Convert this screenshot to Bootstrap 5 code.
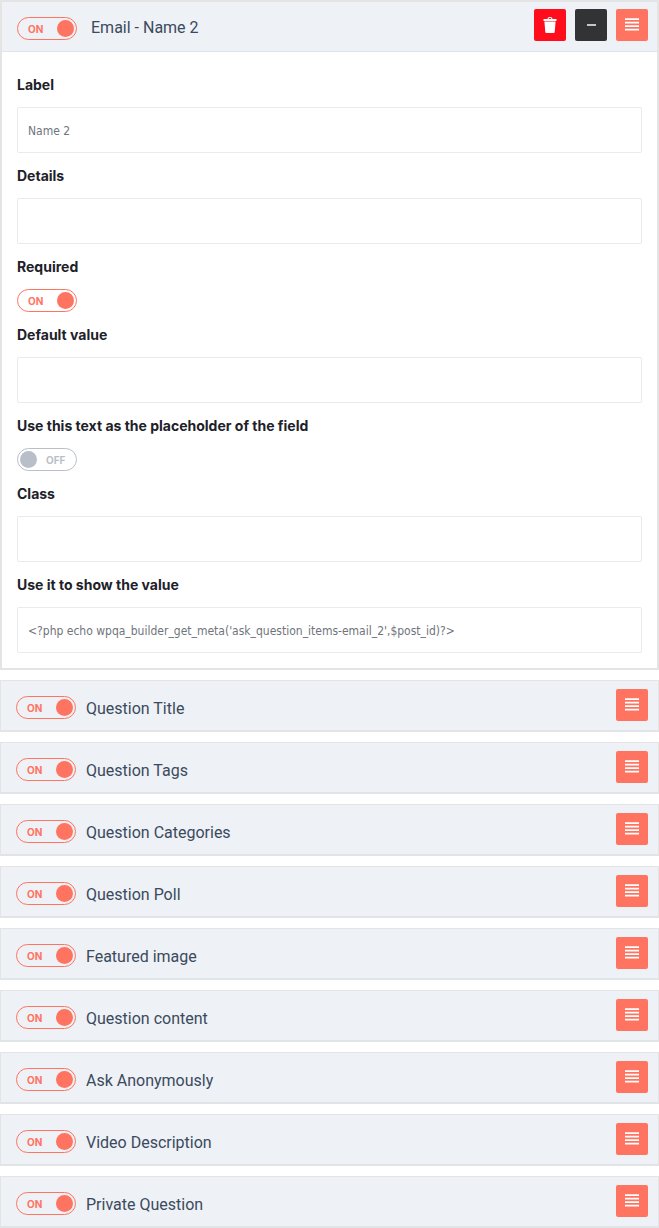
<!DOCTYPE html>
<html lang="en">
<head>
<meta charset="utf-8">
<meta name="viewport" content="width=device-width, initial-scale=1">
<title>Question form builder</title>
<link href="https://cdn.jsdelivr.net/npm/bootstrap@5.3.0/dist/css/bootstrap.min.css" rel="stylesheet">
<style>
  body { font-family: Inter, "Liberation Sans", sans-serif; color: #1d2129; background: #fff; }
  .builder { gap: 10px; }
  .item { border: 1px solid #e4e4e4; }
  .item-open { border-width: 2px; }
  .item-head { background: #eef1f6; border-bottom: 1px solid #dfe3ea; height: 50px; padding: 8px 10px 0 15px; gap: 10px; }
  .item-open .item-head { padding: 7px 9px 0 15px; gap: 14px; }
  .item-title { font-family: Roboto, sans-serif; font-size: 16px; line-height: 20px; font-weight: 400; color: #3b4a5c; margin: 10px 0 0; }
  .item-open .item-title { margin-top: 9px; }
  .item-head .toggle { margin-top: 7px; }
  .item-open .item-head .toggle { margin-top: 8px; }
  .tools { gap: 9px; }
  .tool { width: 32px; height: 32px; border: 0; border-radius: 2px; color: #fff; }
  .tool-delete { background: #ff0d1d; }
  .tool-fold { background: #323335; }
  .tool-move { background: #ff7361; }
  .item-body { padding: 10px 15px 15px; }
  .field-label { display: block; font-size: 14px; line-height: 20px; font-weight: 700; margin: 13px 0 12px; }
  .field-input { height: 46px; border: 1px solid #e8eaef; border-radius: 2px; padding: 2px 10px 0; font-family: "DejaVu Sans Condensed", sans-serif; font-size: 12px; color: #6f747c; }
  .toggle { width: 60px; height: 23px; cursor: pointer; font-size: 10px; line-height: 23px; font-weight: 700; color: #ff7361; }
  .toggle > * { grid-area: 1 / 1; }
  .toggle input { appearance: none; width: 60px; height: 23px; margin: 0; border: 1px solid #b9bfc8; border-radius: 12px; background: #fff; padding: 2px; display: flex; cursor: pointer; }
  .toggle input::before { content: ""; width: 17px; height: 17px; border-radius: 50%; background: #b9bfc8; }
  .toggle input:checked { border-color: #ff7361; justify-content: flex-end; }
  .toggle input:checked::before { background: #ff7361; }
  .item-head .toggle input { background: transparent; }
  .text-on, .text-off { pointer-events: none; padding-top: 1px; }
  .text-on { padding-left: 11px; }
  .text-off { padding-left: 29px; color: #b9bfc8; }
  .toggle input:checked ~ .text-off, .toggle input:not(:checked) ~ .text-on { display: none; }
</style>
</head>
<body>
<svg class="d-none" aria-hidden="true">
  <symbol id="lines" viewBox="0 0 14 14"><path d="M0 .3h14V2H0zM0 3.800h14v1.700H0zM0 7.300h14V9H0zM0 10.800h14v1.700H0z" fill="currentColor"/></symbol>
</svg>
<main class="builder d-flex flex-column" id="builder">
  <section class="item item-open">
    <header class="item-head d-flex align-items-start">
      <label class="toggle d-grid"><input type="checkbox" role="switch" aria-label="Email - Name 2" checked><span class="text-on">ON</span><span class="text-off">OFF</span></label>
      <h2 class="item-title">Email - Name 2</h2>
      <div class="tools d-flex ms-auto">
        <button type="button" class="tool tool-delete p-0 d-flex align-items-center justify-content-center" aria-label="Delete"><svg width="14" height="16" viewBox="0 0 14 16" fill="currentColor"><path d="M.5 2h4C4.500.8 5.400 0 7 0s2.500.8 2.500 2h4v2H.5zM5.700 2h2.600c0-.6-.5-.9-1.300-.9S5.700 1.400 5.700 2zM1.400 4.600h11.200l-.9 10.400c-.1.700-.4 1-1 1H3.300c-.6 0-.9-.3-1-1z"/></svg></button>
        <button type="button" class="tool tool-fold p-0 d-flex align-items-center justify-content-center" aria-label="Collapse"><svg width="9" height="2" viewBox="0 0 9 2"><path d="M0 0h9v2H0z" fill="#c3c6ca"/></svg></button>
        <button type="button" class="tool tool-move p-0 d-flex align-items-center justify-content-center" aria-label="Move"><svg width="14" height="14"><use href="#lines"/></svg></button>
      </div>
    </header>
    <div class="item-body">
      <label class="field-label" for="f-label">Label</label>
      <input class="field-input w-100 d-block" id="f-label" type="text" value="Name 2">
      <label class="field-label" for="f-details">Details</label>
      <input class="field-input w-100 d-block" id="f-details" type="text">
      <label class="field-label" for="f-required">Required</label>
      <label class="toggle d-grid"><input type="checkbox" role="switch" id="f-required" checked><span class="text-on">ON</span><span class="text-off">OFF</span></label>
      <label class="field-label" for="f-default">Default value</label>
      <input class="field-input w-100 d-block" id="f-default" type="text">
      <label class="field-label" for="f-placeholder">Use this text as the placeholder of the field</label>
      <label class="toggle d-grid"><input type="checkbox" role="switch" id="f-placeholder"><span class="text-on">ON</span><span class="text-off">OFF</span></label>
      <label class="field-label" for="f-class">Class</label>
      <input class="field-input w-100 d-block" id="f-class" type="text">
      <label class="field-label" for="f-value">Use it to show the value</label>
      <input class="field-input w-100 d-block" id="f-value" type="text" value="&lt;?php echo wpqa_builder_get_meta('ask_question_items-email_2',$post_id)?&gt;">
    </div>
  </section>
</main>
<template id="row">
  <section class="item">
    <header class="item-head d-flex align-items-start">
      <label class="toggle d-grid"><input type="checkbox" role="switch" checked><span class="text-on">ON</span><span class="text-off">OFF</span></label>
      <h2 class="item-title"></h2>
      <div class="tools d-flex ms-auto">
        <button type="button" class="tool tool-move p-0 d-flex align-items-center justify-content-center" aria-label="Move"><svg width="14" height="14"><use href="#lines"/></svg></button>
      </div>
    </header>
  </section>
</template>
<script src="https://cdn.jsdelivr.net/npm/bootstrap@5.3.0/dist/js/bootstrap.bundle.min.js"></script>
<script>
  const names = ["Question Title", "Question Tags", "Question Categories", "Question Poll", "Featured image",
    "Question content", "Ask Anonymously", "Video Description", "Private Question"];
  const builder = document.getElementById("builder");
  const row = document.getElementById("row");
  for (const name of names) {
    const item = row.content.cloneNode(true);
    item.querySelector(".item-title").textContent = name;
    item.querySelector("input").setAttribute("aria-label", name);
    builder.append(item);
  }
</script>
</body>
</html>
